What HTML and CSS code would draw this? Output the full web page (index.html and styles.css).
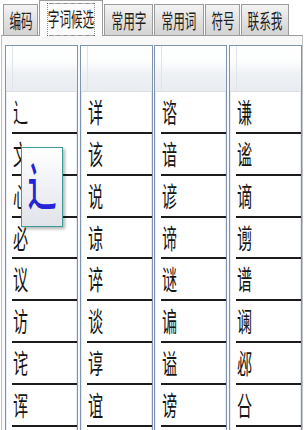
FILE: index.html
```html
<!DOCTYPE html>
<html lang="zh">
<head>
<meta charset="utf-8">
<link rel="stylesheet" href="styles.css">
</head>
<body>
<div class="app">
  <div class="tabs">
    <div class="tab w2"><span class="lbl">编码</span></div>
    <div class="tab sel"><span class="lbl focus">字词候选</span></div>
    <div class="tab w3"><span class="lbl">常用字</span></div>
    <div class="tab w3b"><span class="lbl">常用词</span></div>
    <div class="tab w2"><span class="lbl">符号</span></div>
    <div class="tab w3c"><span class="lbl">联系我</span></div>
  </div>
  <div class="panel">
    <div class="lists">
      <div class="list">
        <div class="head"><div class="gut"></div><div class="hcell"></div></div>
        <div class="row"><span class="ch">辶</span></div>
        <div class="row"><span class="ch">文</span></div>
        <div class="row"><span class="ch">心</span></div>
        <div class="row"><span class="ch">必</span></div>
        <div class="row"><span class="ch">议</span></div>
        <div class="row"><span class="ch">访</span></div>
        <div class="row"><span class="ch">诧</span></div>
        <div class="row"><span class="ch">诨</span></div>
        <div class="row"><span class="ch"></span></div>
      </div>
      <div class="list">
        <div class="head"><div class="gut"></div><div class="hcell"></div></div>
        <div class="row"><span class="ch">详</span></div>
        <div class="row"><span class="ch">该</span></div>
        <div class="row"><span class="ch">说</span></div>
        <div class="row"><span class="ch">谅</span></div>
        <div class="row"><span class="ch">谇</span></div>
        <div class="row"><span class="ch">谈</span></div>
        <div class="row"><span class="ch">谆</span></div>
        <div class="row"><span class="ch">谊</span></div>
        <div class="row"><span class="ch"></span></div>
      </div>
      <div class="list">
        <div class="head"><div class="gut"></div><div class="hcell"></div></div>
        <div class="row"><span class="ch">谘</span></div>
        <div class="row"><span class="ch">谙</span></div>
        <div class="row"><span class="ch">谚</span></div>
        <div class="row"><span class="ch">谛</span></div>
        <div class="row"><span class="ch">谜</span></div>
        <div class="row"><span class="ch">谝</span></div>
        <div class="row"><span class="ch">谥</span></div>
        <div class="row"><span class="ch">谤</span></div>
        <div class="row"><span class="ch"></span></div>
      </div>
      <div class="list">
        <div class="head"><div class="gut"></div><div class="hcell"></div></div>
        <div class="row"><span class="ch">谦</span></div>
        <div class="row"><span class="ch">谧</span></div>
        <div class="row"><span class="ch">谪</span></div>
        <div class="row"><span class="ch">谫</span></div>
        <div class="row"><span class="ch">谱</span></div>
        <div class="row"><span class="ch">谰</span></div>
        <div class="row"><span class="ch">邲</span></div>
        <div class="row"><span class="ch">㕣</span></div>
        <div class="row"><span class="ch"></span></div>
      </div>
    </div>
  </div>
  <div class="popup"><span class="big">辶</span></div>
</div>
</body>
</html>
```
FILE: styles.css
```css
html, body {
  margin: 0;
  padding: 0;
}
body {
  width: 304px;
  height: 430px;
  overflow: hidden;
  background: #ffffff;
  font-family: "Noto Sans CJK SC", "Noto Sans", sans-serif;
  color: #1a1a1a;
}
.app {
  position: relative;
  width: 304px;
  height: 430px;
  overflow: hidden;
}
.tabs {
  display: flex;
  align-items: flex-end;
  height: 35px;
  padding-left: 3px;
  gap: 1px;
  position: relative;
  z-index: 2;
}
.tab {
  box-sizing: border-box;
  height: 31px;
  border: 1px solid #9c9c9c;
  border-bottom: none;
  background: linear-gradient(#f3f3f3, #e2e2e2 50%, #d3d3d3);
  display: flex;
  align-items: center;
  justify-content: center;
  font-size: 20px;
  color: #1e1e1e;
  overflow: visible;
}
.w2 { width: 35px; }
.w3 { width: 49px; }
.w3b { width: 50px; }
.w3c { width: 48px; }
.sel {
  width: 64px;
  height: 36px;
  margin-bottom: -1px;
  background: #fbfbfb;
  padding-top: 2px;
}
.lbl {
  display: inline-block;
  white-space: nowrap;
  transform: scaleX(0.58);
  line-height: 24px;
  padding-top: 1px;
}
.sel .focus {
  outline: 1px dotted #444;
  outline-offset: 0;
  width: 102px;
  text-align: center;
  box-sizing: border-box;
  height: 31px;
  padding: 3px 0 0;
  transform: scaleX(0.58);
}
.panel {
  margin-left: 1px;
  width: 302px;
  box-sizing: border-box;
  height: 395px;
  border-top: 1px solid #9c9c9c;
  border-left: 1px solid #c4c4c4;
  border-right: 1px solid #c4c4c4;
  background: #f8f8f8;
  padding: 9px 0 0 3px;
}
.lists {
  display: grid;
  grid-template-columns: repeat(4, 73px);
  column-gap: 1.67px;
}
.list {
  box-sizing: border-box;
  height: 400px;
  border: 1px solid #7f95ae;
  background: #ffffff;
  box-shadow: inset 0 0 0 1px #e4ebf2;
}
.head {
  display: flex;
  height: 46px;
  box-sizing: border-box;
  border-bottom: 1px solid #d9dee4;
  background: linear-gradient(#ffffff 0%, #fcfdfd 35%, #eff2f5 60%, #e9ecf0 100%);
}
.gut {
  width: 6px;
}
.hcell {
  flex: 1;
  border-left: 1px solid #e0e4e8;
}
.row {
  box-sizing: border-box;
  height: 41.86px;
  margin-left: 6px;
  border-bottom: 2px solid #1c1c1c;
  padding-top: 1px;
}
.ch {
  display: inline-block;
  font-size: 27px;
  line-height: 38px;
  margin-left: 1px;
  transform: scaleX(0.56);
  transform-origin: left center;
  color: #161616;
}
.popup {
  position: absolute;
  left: 21px;
  top: 147px;
  width: 42px;
  height: 80px;
  box-sizing: border-box;
  border: 1px solid #3e9c97;
  background: linear-gradient(#ffffff, #f3f4f7 40%, #e1e3ea);
  box-shadow: 2px 2px 3px rgba(0, 0, 0, 0.3);
  display: flex;
  align-items: center;
  justify-content: center;
  z-index: 3;
}
.big {
  display: inline-block;
  font-size: 52px;
  font-weight: 500;
  line-height: 54px;
  color: #2424d6;
  transform: scaleX(0.56);
  margin-top: -6px;
}
```
